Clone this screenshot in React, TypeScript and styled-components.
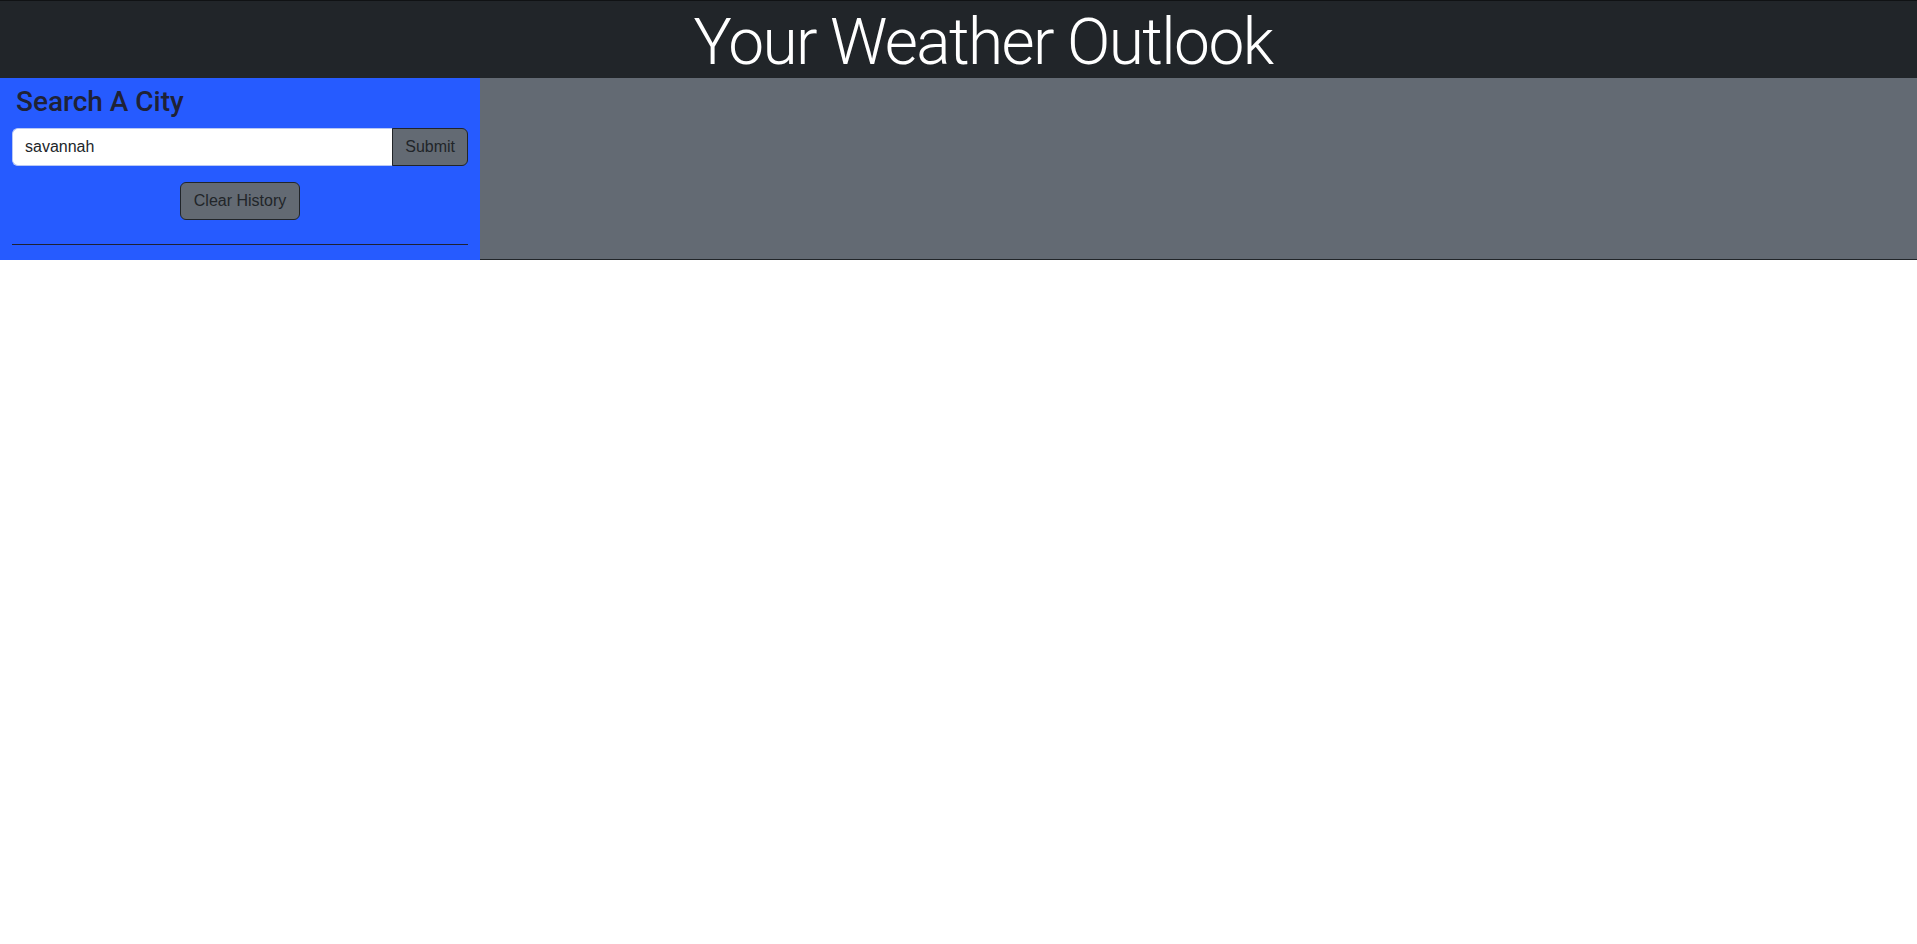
import React from "react";
import styled, { createGlobalStyle } from "styled-components";

const GlobalStyle = createGlobalStyle`
  html, body {
    margin: 0;
    padding: 0;
    background: #ffffff;
  }
  body {
    font-family: "Liberation Sans", Arial, sans-serif;
    color: #212529;
  }
  * { box-sizing: border-box; }
`;

const Header = styled.header`
  background: #212529;
  border-top: 1px solid #101214;
  height: 78px;
  display: flex;
  align-items: flex-start;
  justify-content: center;
  padding: 10px 0 0 49px;
`;

const Title = styled.h1`
  margin: 0;
  font-family: Roboto, "Liberation Sans", sans-serif;
  font-weight: 300;
  font-size: 64px;
  letter-spacing: -1.6px;
  line-height: 1;
  color: #ffffff;
  white-space: nowrap;
`;

const Main = styled.main`
  display: grid;
  grid-template-columns: 480px 1fr;
  align-items: stretch;
`;

const Sidebar = styled.aside`
  background: #265bff;
  padding: 7px 12px 0;
  display: flex;
  flex-direction: column;
`;

const SideTitle = styled.h3`
  margin: 0 0 9px 4px;
  font-family: Roboto, "Liberation Sans", sans-serif;
  font-weight: 500;
  font-size: 28px;
  line-height: 1.2;
  color: #1f2236;
`;

const InputGroup = styled.form`
  display: flex;
  height: 38px;
  margin: 0;
`;

const CityInput = styled.input`
  flex: 1;
  min-width: 0;
  height: 38px;
  padding: 6px 12px;
  font-family: "Liberation Sans", Arial, sans-serif;
  font-size: 16px;
  line-height: 1.5;
  color: #212529;
  background: #ffffff;
  border: 1px solid #b9c8f5;
  border-right: none;
  border-radius: 6px 0 0 6px;
  outline: none;
`;

const Button = styled.button<{ $joined?: boolean }>`
  height: 38px;
  padding: 6px ${(p) => (p.$joined ? "12px" : "13px")};
  font-family: "Liberation Sans", Arial, sans-serif;
  font-size: 16px;
  line-height: 1.5;
  color: #212529;
  background: #636a73;
  border: 1px solid #212529;
  border-radius: ${(p) => (p.$joined ? "0 6px 6px 0" : "6px")};
  cursor: pointer;
`;

const ClearRow = styled.div`
  display: flex;
  justify-content: center;
  margin-top: 16px;
`;

const Divider = styled.hr`
  margin: 24px 0 15px;
  border: none;
  border-top: 1px solid #1f2233;
  height: 0;
`;

const Content = styled.section`
  background: #636a73;
  border-bottom: 1px solid #212529;
`;

export default function App() {
  return (
    <>
      <GlobalStyle />
      <Header>
        <Title>Your Weather Outlook</Title>
      </Header>
      <Main>
        <Sidebar>
          <SideTitle>Search A City</SideTitle>
          <InputGroup onSubmit={(e) => e.preventDefault()}>
            <CityInput type="text" defaultValue="savannah" />
            <Button type="submit" $joined>
              Submit
            </Button>
          </InputGroup>
          <ClearRow>
            <Button type="button">Clear History</Button>
          </ClearRow>
          <Divider />
        </Sidebar>
        <Content />
      </Main>
    </>
  );
}
